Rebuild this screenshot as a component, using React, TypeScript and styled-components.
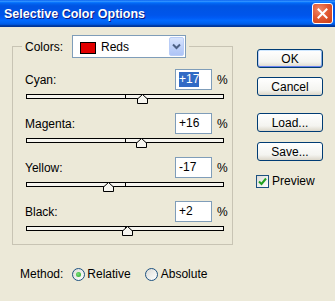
import React from 'react';
import styled, { createGlobalStyle } from 'styled-components';

const GlobalStyle = createGlobalStyle`
  html, body {
    margin: 0;
    padding: 0;
    background: #ece9d8;
  }
  body {
    font-family: "Liberation Sans", Arial, sans-serif;
    font-size: 12px;
    color: #000;
  }
`;

const Dialog = styled.div`
  width: 335px;
  height: 301px;
  background: #ece9d8;
  display: flex;
  flex-direction: column;
  overflow: hidden;
`;

const TitleBar = styled.div`
  height: 27px;
  flex: none;
  display: flex;
  align-items: center;
  justify-content: space-between;
  padding: 0 2px 0 4px;
  box-sizing: border-box;
  background: linear-gradient(
    #0058ee 0%, #3593ff 4%, #288eff 6%, #127dff 8%, #036ffc 10%,
    #0262ee 14%, #0057e5 20%, #0054e3 24%, #0055eb 56%, #005bf5 66%,
    #026afe 76%, #0062ef 86%, #0052d6 92%, #0040ab 94%, #003092 100%
  );
`;

const TitleText = styled.span`
  color: #fff;
  font-weight: bold;
  font-size: 12.5px;
  text-shadow: 1px 1px #0a1883;
`;

const CloseButton = styled.div`
  width: 21px;
  height: 21px;
  box-sizing: border-box;
  border: 1px solid #fff;
  border-radius: 3px;
  background: radial-gradient(circle at 35% 30%, #f0896a 0%, #e25a33 45%, #c93c16 100%);
  display: flex;
  align-items: center;
  justify-content: center;
`;

const Body = styled.div`
  flex: 1;
  display: flex;
`;

const LeftColumn = styled.div`
  width: 233px;
  padding: 8px 0 0 12px;
  box-sizing: border-box;
  display: flex;
  flex-direction: column;
`;

const GroupBox = styled.fieldset`
  width: 221px;
  box-sizing: border-box;
  margin: 0;
  padding: 11px 0 13px 0;
  border: 1px solid #c8c4b4;
  min-inline-size: 0;
`;

const Legend = styled.legend`
  margin-left: 9px;
  padding: 0 3px;
  height: 23px;
  display: flex;
  align-items: center;
`;

const LegendLabel = styled.span`
  width: 47px;
`;

const Select = styled.div`
  width: 114px;
  height: 23px;
  box-sizing: border-box;
  border: 1px solid #7f9db9;
  background: #fff;
  display: flex;
  align-items: center;
  padding: 0 1px 0 7px;
`;

const Swatch = styled.span<{ $color: string }>`
  width: 16px;
  height: 12px;
  box-sizing: border-box;
  border: 1px solid #000;
  background: ${p => p.$color};
  margin-top: 2px;
`;

const SelectText = styled.span`
  flex: 1;
  margin-left: 5px;
`;

const SelectArrow = styled.span`
  width: 15px;
  height: 19px;
  box-sizing: border-box;
  border: 1px solid #b9cdf7;
  border-radius: 2px;
  background: linear-gradient(#d8e4fd, #bccff9 60%, #aec4f6);
  display: flex;
  align-items: center;
  justify-content: center;
`;

const Rows = styled.div`
  padding-left: 12px;
  display: flex;
  flex-direction: column;
  gap: 14px;
`;

const Row = styled.div`
  display: flex;
  flex-direction: column;
`;

const RowHeader = styled.div`
  width: 201px;
  height: 21px;
  display: flex;
  align-items: center;
`;

const RowLabel = styled.span`
  flex: 1;
`;

const ValueBox = styled.div`
  width: 37px;
  height: 21px;
  box-sizing: border-box;
  border: 1px solid #7f9db9;
  background: #fff;
  display: flex;
  align-items: center;
  padding: 0 3px;
`;

const ValueText = styled.span<{ $selected?: boolean }>`
  background: ${p => (p.$selected ? '#316ac5' : 'transparent')};
  color: ${p => (p.$selected ? '#fff' : '#000')};
  line-height: 15px;
`;

const Percent = styled.span`
  width: 9px;
  margin-left: 5px;
`;

const Track = styled.div`
  position: relative;
  width: 198px;
  height: 5px;
  margin: 4px 0 0 1px;
  box-sizing: border-box;
  border: 1px solid #000;
  background: #f6f5ef;

  &::after {
    content: '';
    position: absolute;
    left: 98px;
    top: 0;
    width: 1px;
    height: 100%;
    background: #000;
  }
`;

const Thumb = styled.svg`
  position: absolute;
  top: -1px;
  z-index: 1;
`;

const MethodRow = styled.div`
  margin: 21px 0 0 8px;
  height: 16px;
  display: flex;
  align-items: center;
`;

const MethodLabel = styled.span`
  margin-right: 9px;
`;

const RadioOption = styled.label<{ $gap: number }>`
  display: flex;
  align-items: center;
  gap: ${p => p.$gap}px;
  margin-right: 14px;
`;

const RadioCircle = styled.span<{ $checked?: boolean }>`
  width: 13px;
  height: 13px;
  box-sizing: border-box;
  border: 1px solid #1c5180;
  border-radius: 50%;
  background: linear-gradient(135deg, #dcdcd7, #fff);
  display: flex;
  align-items: center;
  justify-content: center;

  &::after {
    content: '';
    display: ${p => (p.$checked ? 'block' : 'none')};
    width: 5px;
    height: 5px;
    border-radius: 50%;
    background: radial-gradient(circle at 40% 40%, #7be07b, #21a121);
  }
`;

const RightColumn = styled.div`
  padding: 22px 0 0 24px;
  display: flex;
  flex-direction: column;
`;

const Button = styled.div<{ $default?: boolean; $mt: number }>`
  width: 66px;
  height: 19px;
  margin-top: ${p => p.$mt}px;
  box-sizing: border-box;
  border: 1px solid #003c74;
  border-radius: 3px;
  background: linear-gradient(#ffffff, #f4f4f0 70%, #dcd7ca);
  display: flex;
  align-items: center;
  justify-content: center;
  box-shadow: ${p =>
    p.$default
      ? 'inset 0 1px #cee7ff, inset 0 -1px #6982ee, inset 1px 0 #bccff9, inset -1px 0 #89ade4'
      : 'none'};
`;

const CheckRow = styled.label`
  margin-top: 13px;
  display: flex;
  align-items: center;
  gap: 3px;
  margin-left: -1px;
`;

const CheckBox = styled.span`
  width: 13px;
  height: 13px;
  box-sizing: border-box;
  border: 1px solid #1c5180;
  background: linear-gradient(135deg, #dcdcd7, #fff);
  display: flex;
  align-items: center;
  justify-content: center;
`;

const sliders = [
  { label: 'Cyan:', value: 17, selected: true },
  { label: 'Magenta:', value: 16 },
  { label: 'Yellow:', value: -17 },
  { label: 'Black:', value: 2 },
];

const fmt = (v: number) => (v > 0 ? `+${v}` : `${v}`);

const App: React.FC = () => {
  return (
    <>
      <GlobalStyle />
      <Dialog>
        <TitleBar>
          <TitleText>Selective Color Options</TitleText>
          <CloseButton>
            <svg width="11" height="11" viewBox="0 0 11 11">
              <path d="M1.5 1.5 L9.5 9.5 M9.5 1.5 L1.5 9.5" stroke="#fff" strokeWidth="2" strokeLinecap="square" />
            </svg>
          </CloseButton>
        </TitleBar>
        <Body>
          <LeftColumn>
            <GroupBox>
              <Legend>
                <LegendLabel>Colors:</LegendLabel>
                <Select>
                  <Swatch $color="#e00000" />
                  <SelectText>Reds</SelectText>
                  <SelectArrow>
                    <svg width="9" height="7" viewBox="0 0 9 7">
                      <path d="M1 1.5 L4.5 5 L8 1.5" fill="none" stroke="#4d6185" strokeWidth="2" />
                    </svg>
                  </SelectArrow>
                </Select>
              </Legend>
              <Rows>
                {sliders.map(s => (
                  <Row key={s.label}>
                    <RowHeader>
                      <RowLabel>{s.label}</RowLabel>
                      <ValueBox>
                        <ValueText $selected={s.selected}>{fmt(s.value)}</ValueText>
                      </ValueBox>
                      <Percent>%</Percent>
                    </RowHeader>
                    <Track>
                      <Thumb
                        width="11"
                        height="10"
                        viewBox="0 0 11 10"
                        style={{ left: Math.round(98 + s.value * 0.99) - 5 }}
                      >
                        <path d="M5.5 0.5 L10.5 5 L10.5 9.5 L0.5 9.5 L0.5 5 Z" fill="#f6f5ef" stroke="#000" />
                      </Thumb>
                    </Track>
                  </Row>
                ))}
              </Rows>
            </GroupBox>
            <MethodRow>
              <MethodLabel>Method:</MethodLabel>
              <RadioOption $gap={2}>
                <RadioCircle $checked />
                Relative
              </RadioOption>
              <RadioOption $gap={3}>
                <RadioCircle />
                Absolute
              </RadioOption>
            </MethodRow>
          </LeftColumn>
          <RightColumn>
            <Button $default $mt={0}>OK</Button>
            <Button $mt={9}>Cancel</Button>
            <Button $mt={17}>Load...</Button>
            <Button $mt={10}>Save...</Button>
            <CheckRow>
              <CheckBox>
                <svg width="9" height="9" viewBox="0 0 9 9">
                  <path d="M1 4.5 L3.5 7 L8 1.5" fill="none" stroke="#21a121" strokeWidth="2" />
                </svg>
              </CheckBox>
              Preview
            </CheckRow>
          </RightColumn>
        </Body>
      </Dialog>
    </>
  );
};

export default App;
